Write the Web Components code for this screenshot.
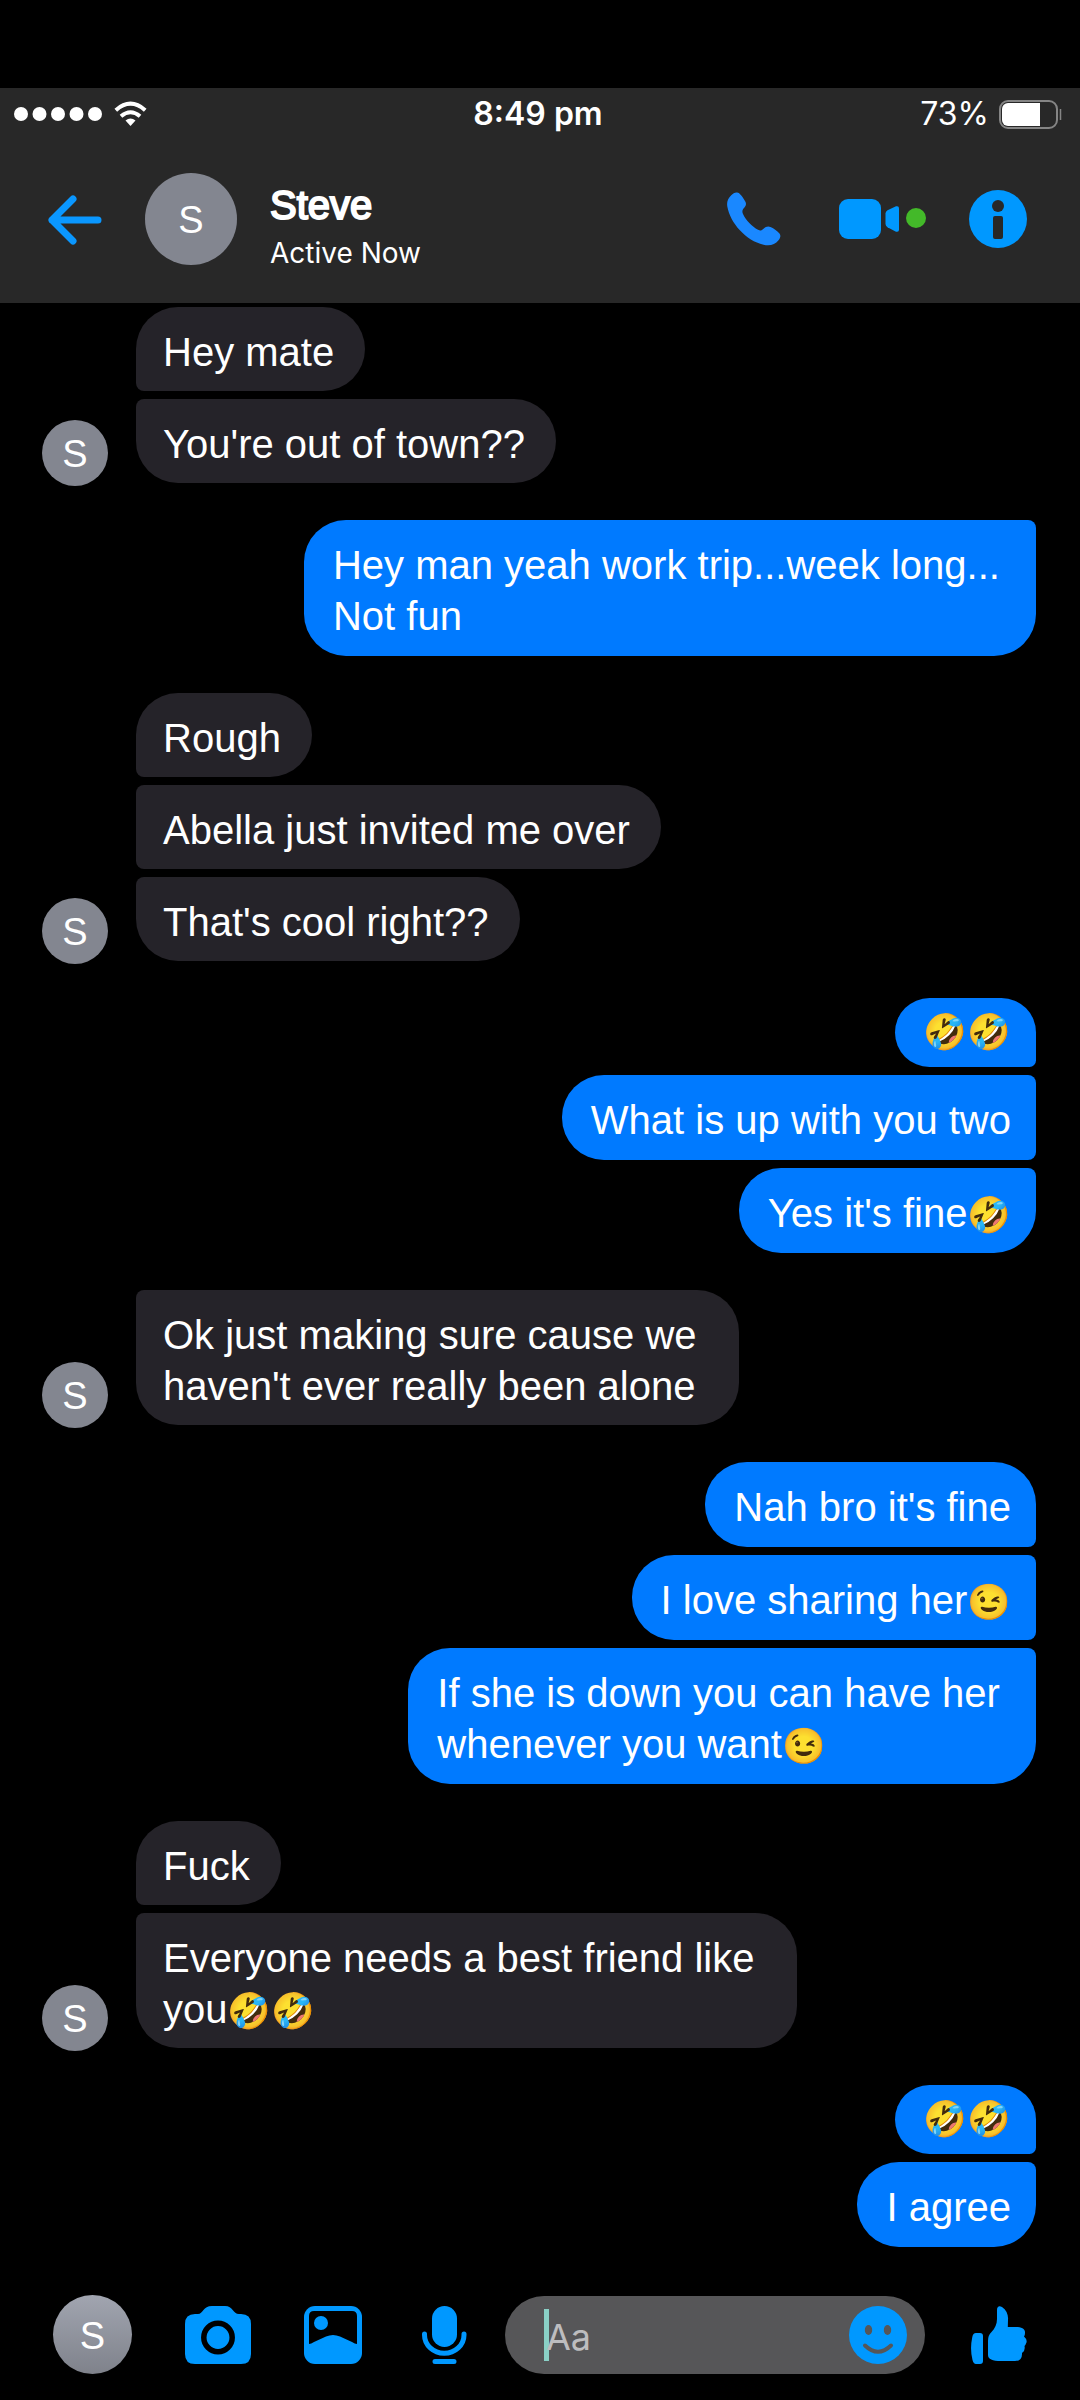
<!DOCTYPE html>
<html lang="en">
<head>
<meta charset="utf-8">
<meta name="viewport" content="width=device-width, initial-scale=1">
<title>Steve</title>
<style>
  html, body { margin: 0; background: #000; }
  body { font-family: "Liberation Sans", Arial, sans-serif; color: #fff; }
</style>
</head>
<body>
<chat-app>
  <status-bar slot="header" time="8:49 pm" battery="73"></status-bar>
  <chat-header slot="header" name="Steve" status="Active Now"></chat-header>

  <message-group side="in" initial="S">
    <chat-bubble>Hey mate</chat-bubble>
    <chat-bubble>You're out of town??</chat-bubble>
  </message-group>
  <message-group side="out">
    <chat-bubble>Hey man yeah work trip...week long...&nbsp;<br>Not fun</chat-bubble>
  </message-group>
  <message-group side="in" initial="S">
    <chat-bubble>Rough</chat-bubble>
    <chat-bubble>Abella just invited me over</chat-bubble>
    <chat-bubble>That's cool right??</chat-bubble>
  </message-group>
  <message-group side="out">
    <chat-bubble emoji-only><emo-ji>🤣🤣</emo-ji></chat-bubble>
    <chat-bubble>What is up with you two</chat-bubble>
    <chat-bubble>Yes it's fine<emo-ji>🤣</emo-ji></chat-bubble>
  </message-group>
  <message-group side="in" initial="S">
    <chat-bubble>Ok just making sure cause we&nbsp;<br>haven't ever really been alone</chat-bubble>
  </message-group>
  <message-group side="out">
    <chat-bubble>Nah bro it's fine</chat-bubble>
    <chat-bubble>I love sharing her<emo-ji>😉</emo-ji></chat-bubble>
    <chat-bubble>If she is down you can have her&nbsp;<br>whenever you want<emo-ji>😉</emo-ji></chat-bubble>
  </message-group>
  <message-group side="in" initial="S">
    <chat-bubble>Fuck</chat-bubble>
    <chat-bubble>Everyone needs a best friend like&nbsp;<br>you<emo-ji>🤣🤣</emo-ji></chat-bubble>
  </message-group>
  <message-group side="out">
    <chat-bubble emoji-only><emo-ji>🤣🤣</emo-ji></chat-bubble>
    <chat-bubble>I agree</chat-bubble>
  </message-group>

  <chat-composer slot="footer" initial="S"></chat-composer>
</chat-app>

<script>
class BaseElement extends HTMLElement {
  connectedCallback() {
    if (this.shadowRoot) return;
    this.attachShadow({ mode: 'open' }).innerHTML = this.render();
  }
}

const buttonReset = `
  button { appearance: none; border: 0; margin: 0; padding: 0; background: none; display: flex;
    justify-content: center; align-items: center; cursor: pointer; }
  svg { display: block; flex: none; }
`;

customElements.define('chat-app', class extends BaseElement {
  render() {
    return `<style>
      :host { display: flex; flex-direction: column; min-height: 100vh; box-sizing: border-box; padding-top: 88px; background: #000; }
      header { background: #282828; }
      main { flex: 1; display: flex; flex-direction: column; gap: 37px; padding: 4px 44px 0 42px; }
      footer { padding: 48px 0 26px; }
    </style>
    <header><slot name="header"></slot></header>
    <main><slot></slot></main>
    <footer><slot name="footer"></slot></footer>`;
  }
});

customElements.define('status-bar', class extends BaseElement {
  render() {
    return `<style>
      :host { display: grid; grid-template-columns: 1fr auto 1fr; align-items: center; height: 52px; padding: 0 18px 0 14px;
        font: 32px/52px Inter, sans-serif; }
      div { display: flex; align-items: center; gap: 12px; }
      .right { justify-content: flex-end; gap: 10px; }
      time { font-weight: 600; }
      svg { display: block; }
    </style>
    <div>
      <svg width="88" height="14" viewBox="0 0 88 14" fill="#fff" aria-label="Signal"><circle cx="7" cy="7" r="7"/><circle cx="25.5" cy="7" r="7"/><circle cx="44" cy="7" r="7"/><circle cx="62.5" cy="7" r="7"/><circle cx="81" cy="7" r="7"/></svg>
      <svg width="33" height="26" viewBox="0 0 33 26" fill="none" stroke="#fff" stroke-width="4" aria-label="Wi-Fi"><path d="M1.8 9.2Q16.500-3.800 31.200 9.200"/><path d="M7 15.200Q16.500 7.200 26 15.200"/><path d="M11.500 19.500Q16.500 15.500 21.500 19.500L16.500 25Z" fill="#fff" stroke="none"/></svg>
    </div>
    <time>${this.getAttribute('time')}</time>
    <div class="right"><span>${this.getAttribute('battery')}%</span>
      <svg width="63" height="29" viewBox="0 0 63 29" aria-label="Battery"><rect x="1" y="1" width="57" height="27" rx="8" fill="none" stroke="#858585" stroke-width="2"/><path d="M9 3H41V26H9A6 6 0 0 1 3 20V9A6 6 0 0 1 9 3Z" fill="#fff"/><path d="M61.500 9V20" stroke="#858585" stroke-width="1.500"/></svg>
    </div>`;
  }
});

customElements.define('user-avatar', class extends BaseElement {
  render() {
    return `<style>
      :host { display: flex; align-items: center; justify-content: center; flex: none; width: var(--size, 66px); height: var(--size, 66px);
        border-radius: 50%; background: var(--fill, #838690); color: #fff; font: 38px/38px "Liberation Sans", Arial, sans-serif; }
      span { padding-top: 2px; }
    </style><span><slot></slot></span>`;
  }
});

customElements.define('chat-header', class extends BaseElement {
  render() {
    return `<style>${buttonReset}
      :host { display: flex; align-items: center; padding: 33px 53px 38px 48px; }
      user-avatar { --size: 92px; margin: 0 33px 0 43px; }
      .who { flex: 1; padding-top: 16px; margin: -6px 0; }
      h1 { margin: 0 0 9px; font-size: 40px; line-height: 42px; font-weight: 400; -webkit-text-stroke: 2px #fff; }
      p { margin: 0; font: 28px/36px Inter, sans-serif; }
      nav { display: flex; align-items: center; gap: 43px; }
    </style>
    <button aria-label="Back"><svg width="54" height="52" viewBox="0 0 54 52" fill="none" stroke="#0a97ff" stroke-width="7" stroke-linecap="round" stroke-linejoin="round"><path d="M25 6L4 27L25 48M4 27H50"/></svg></button>
    <user-avatar>${this.getAttribute('name')[0]}</user-avatar>
    <div class="who"><h1>${this.getAttribute('name')}</h1><p>${this.getAttribute('status')}</p></div>
    <nav>
      <button aria-label="Call"><svg width="69" height="54" viewBox="0 0 69 54" fill="#1a88ff"><path d="M4 3.500C6.500 1 8.500 0 11 .8C13 1.300 16 5.500 18.300 9.500C19.700 12 18.800 14 17 16C15.500 17.700 14.800 19.500 16 22C19 28.500 25 34.500 31 37.800C33.500 39 34.500 38.500 36.500 36.700C39 34.500 41 34 43.500 35C47 36.500 50.500 39 52.500 41.500C54 43.500 53.500 45.500 51.500 48.300C48 53 42.500 54 36.500 52.700C19 48.800 3.200 31 .3 14.500C-.4 10 .8 6.500 4 3.500Z"/></svg></button>
      <button aria-label="Video call"><svg width="87" height="58" viewBox="0 0 87 58" fill="#0098ff"><rect y="9" width="42" height="40" rx="9"/><path d="M46.500 23.500Q46.500 21.500 48.500 20.300L57 16.300Q60 15.500 60 18.500V39.500Q60 42.500 57 41.700L48.500 37.200Q46.500 36 46.500 34Z"/><circle cx="77" cy="28" r="10" fill="#43b929"/></svg></button>
      <button aria-label="Information"><svg width="58" height="58" viewBox="0 0 58 58"><circle cx="29" cy="29" r="29" fill="#0098ff"/><circle cx="29" cy="16" r="6" fill="#282828"/><rect x="24" y="26" width="10" height="23" rx="2" fill="#282828"/></svg></button>
    </nav>`;
  }
});

customElements.define('emo-ji', class extends BaseElement {
  render() {
    return `<style>:host { display: inline; font-size: 35px; line-height: 0; font-family: "Noto Color Emoji", sans-serif; }</style><slot></slot>`;
  }
});

customElements.define('chat-bubble', class extends BaseElement {
  render() {
    return `<style>
      :host { display: block; box-sizing: border-box; max-width: 740px; padding: var(--bubble-padding); background: var(--bubble-fill);
        border-radius: var(--bubble-radius); font-size: 40px; line-height: 51px; }
      :host([emoji-only]) { padding-top: 7px; padding-bottom: 11px; }
    </style><slot></slot>`;
  }
});

customElements.define('message-group', class extends BaseElement {
  render() {
    const initial = this.getAttribute('initial');
    return `<style>
      :host { display: flex; align-items: flex-end; gap: 28px; }
      :host([side="out"]) { justify-content: flex-end; }
      .stack { display: flex; flex-direction: column; align-items: flex-start; gap: 8px; min-width: 0;
        --bubble-fill: #252329; --bubble-padding: 20px 31px 13px 27px; }
      :host([side="out"]) .stack { align-items: flex-end; --bubble-fill: #007aff; --bubble-padding: 20px 25px 14px 29px; }
      ::slotted(chat-bubble) { --bubble-radius: 8px 42px 42px 8px; }
      ::slotted(chat-bubble:first-child) { --bubble-radius: 42px 42px 42px 8px; }
      ::slotted(chat-bubble:last-child) { --bubble-radius: 8px 42px 42px 42px; }
      :host([side="out"]) ::slotted(chat-bubble) { --bubble-radius: 42px 8px 8px 42px; }
      :host([side="out"]) ::slotted(chat-bubble:first-child) { --bubble-radius: 42px 42px 8px 42px; }
      :host([side="out"]) ::slotted(chat-bubble:last-child) { --bubble-radius: 42px 8px 42px 42px; }
      user-avatar { margin-bottom: -3px; }
    </style>
    ${initial ? `<user-avatar>${initial}</user-avatar>` : ''}
    <div class="stack"><slot></slot></div>`;
  }
});

customElements.define('chat-composer', class extends BaseElement {
  render() {
    return `<style>${buttonReset}
      :host { display: flex; align-items: center; gap: 32px; padding: 0 39px 0 53px; }
      .tools { display: flex; align-items: center; gap: 53px; }
      user-avatar { --size: 79px; --fill: linear-gradient(#a1a5b0, #7f828b); }
      .field { flex: 1; min-width: 0; display: flex; align-items: center; height: 78px; box-sizing: border-box; padding: 0 18px 0 39px;
        border-radius: 39px; background: #565658; }
      .caret { flex: none; width: 5px; height: 52px; background: #8ad0c6; }
      input { flex: 1; min-width: 0; margin: 4px 0 0 -3px; padding: 0; border: 0; outline: 0; background: none; color: #fff;
        font: 36px/44px Inter, sans-serif; }
      input::placeholder { color: #bdbdbf; opacity: 1; }
      .like { width: 84px; }
    </style>
    <div class="tools">
      <user-avatar>${this.getAttribute('initial')}</user-avatar>
      <button aria-label="Camera"><svg width="66" height="58" viewBox="0 0 66 58"><path fill="#0098ff" d="M10 8H13C18 8 18 0 27 0H40C48 0 48 8 54 8H56Q66 8 66 18V48Q66 58 56 58H10Q0 58 0 48V18Q0 8 10 8Z"/><circle cx="33" cy="31.500" r="14.200" fill="#0098ff" stroke="#000" stroke-width="5.500"/></svg></button>
      <button aria-label="Photos"><svg width="58" height="58" viewBox="0 0 58 58"><rect width="58" height="58" rx="11" fill="#0098ff"/><path d="M5 10Q5 5 10 5H48Q53 5 53 10V38Q51 38 48 36L36 30.500Q29 27.500 22 30.500L10 36Q7 38 5 38Z" fill="#000"/><circle cx="17" cy="17" r="7" fill="#0098ff"/></svg></button>
      <button aria-label="Record voice"><svg width="58" height="58" viewBox="0 0 58 58"><rect x="17" width="25" height="41" rx="12.500" fill="#0098ff"/><path d="M9.500 28V29A19.500 18 0 0 0 49 29V28M20 55.500H39" fill="none" stroke="#0098ff" stroke-width="5" stroke-linecap="round"/></svg></button>
    </div>
    <div class="field">
      <span class="caret"></span>
      <input type="text" placeholder="Aa" aria-label="Message">
      <button aria-label="Emoji"><svg width="58" height="58" viewBox="0 0 58 58"><circle cx="29" cy="29" r="29" fill="#0098ff"/><g fill="#565658"><ellipse cx="19.500" cy="24" rx="3.700" ry="5"/><ellipse cx="38.500" cy="24" rx="3.700" ry="5"/></g><path d="M16 39.500Q29 52 42 39.500" fill="none" stroke="#565658" stroke-width="4" stroke-linecap="round"/></svg></button>
    </div>
    <button class="like" aria-label="Like"><svg width="56" height="58" viewBox="0 0 56 58" fill="#0098ff"><path d="M5 27H9Q12 27 12 30V55Q12 58 9 58H5Q2.500 58 1.500 54Q-1.300 43 1.300 31Q2 27 5 27Z"/><path d="M17 35Q17 29 20.500 26C24 22.500 26 18 26 13V4C26 0 28.500-.5 31 1C35.500 4 37.500 9 37 14L36.800 21H44C50 21 54.500 22.500 54 27Q54 29 53 30.500Q57 34 55 37.500Q54.500 39 53.500 40Q54.500 45 51 47Q51.500 55 44 55H30Q17 55 17 49Z"/></svg></button>`;
  }
});
</script>
</body>
</html>
